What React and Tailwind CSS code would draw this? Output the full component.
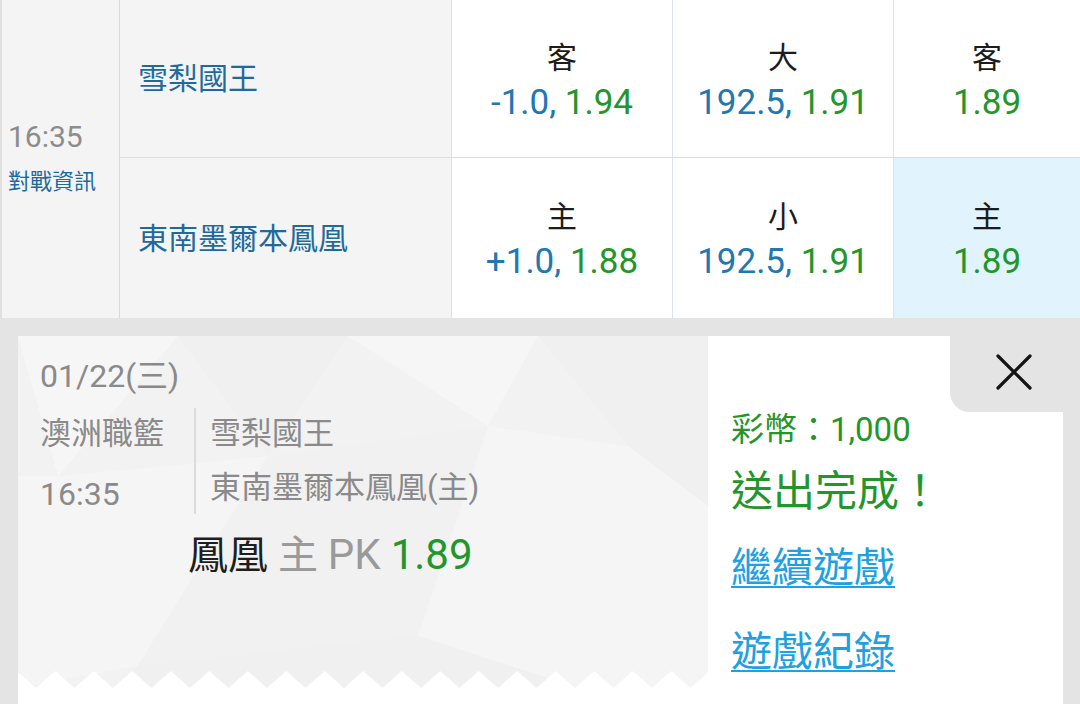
import React from "react";

const font = "font-['Roboto','Noto_Sans_CJK_TC',sans-serif]";

function OddsCell({ label, line, price, active, last }) {
  return (
    <div
      className={`flex flex-col items-center justify-center pt-[5px] ${
        last ? "flex-1" : "w-[221px] border-r border-[#dde2e6]"
      } ${active ? "bg-[#e1f3fc]" : "bg-white"}`}
    >
      <span className="text-[30px] leading-[38px] text-[#1c1c1c]">{label}</span>
      <span className="text-[35px] leading-[42px] mt-[5px]">
        {line && <span className="text-[#2177b1]">{line}, </span>}
        <span className="text-[#22962a]">{price}</span>
      </span>
    </div>
  );
}

function MatchRow({ team, spread, total, money, bottom }) {
  return (
    <div className={`flex ${bottom ? "h-[160px]" : "h-[158px] border-b border-[#d6dde3]"}`}>
      <div className="w-[332px] bg-[#f4f4f4] border-r border-[#dde2e6] flex items-center pl-[18px]">
        <span className="text-[30px] text-[#1f6a9c]">{team}</span>
      </div>
      <OddsCell {...spread} />
      <OddsCell {...total} />
      <OddsCell {...money} last />
    </div>
  );
}

// faint low-poly pattern behind the ticket
function TicketPattern() {
  return (
    <svg className="absolute inset-0 w-full h-full" viewBox="0 0 690 352" preserveAspectRatio="none">
      <polygon points="0,0 160,0 40,140" fill="#ffffff" opacity="0.35" />
      <polygon points="160,0 330,0 250,120" fill="#ededed" opacity="0.4" />
      <polygon points="330,0 520,0 470,90" fill="#ffffff" opacity="0.3" />
      <polygon points="520,0 690,0 690,170 610,110" fill="#ededed" opacity="0.35" />
      <polygon points="0,140 40,140 250,120 120,330 0,352" fill="#f7f7f7" opacity="0.5" />
      <polygon points="250,120 470,90 400,300 120,330" fill="#efefef" opacity="0.4" />
      <polygon points="470,90 610,110 690,170 690,352 560,352 400,300" fill="#f7f7f7" opacity="0.5" />
      <polygon points="120,330 400,300 560,352 100,352" fill="#ededed" opacity="0.4" />
    </svg>
  );
}

function Zigzag() {
  return (
    <svg className="absolute left-0 bottom-0 w-full h-[17px]">
      <defs>
        <pattern id="teeth" x="18" y="0" width="38.5" height="17" patternUnits="userSpaceOnUse">
          <path d="M0 17 L19.25 0 L38.5 17 Z" fill="#ffffff" />
        </pattern>
      </defs>
      <rect width="100%" height="17" fill="url(#teeth)" />
    </svg>
  );
}

export default function App() {
  return (
    <div className={`w-[1080px] h-[704px] overflow-hidden bg-[#e4e4e4] ${font}`}>
      {/* odds table */}
      <div className="flex h-[318px] border-l-2 border-[#e0e0e0] bg-white">
        <div className="w-[118px] bg-[#f4f4f4] border-r border-[#d9d9d9] flex flex-col justify-center pl-[6px] pb-[4px]">
          <span className="text-[30px] leading-[36px] text-[#8c8c8c]">16:35</span>
          <span className="text-[22px] leading-[28px] mt-[13px] text-[#1f6a9c]">對戰資訊</span>
        </div>
        <div className="flex-1 flex flex-col">
          <MatchRow
            team="雪梨國王"
            spread={{ label: "客", line: "-1.0", price: "1.94" }}
            total={{ label: "大", line: "192.5", price: "1.91" }}
            money={{ label: "客", price: "1.89" }}
          />
          <MatchRow
            team="東南墨爾本鳳凰"
            spread={{ label: "主", line: "+1.0", price: "1.88" }}
            total={{ label: "小", line: "192.5", price: "1.91" }}
            money={{ label: "主", price: "1.89", active: true }}
            bottom
          />
        </div>
      </div>

      {/* bet confirmation */}
      <div className="pt-[18px] pl-[18px] pr-[17px]">
        <div className="flex bg-white h-[380px]">
          <div className="relative w-[690px] h-[352px] bg-[#f2f2f2]">
            <TicketPattern />
            <Zigzag />
            <div className="relative pl-[22px] pt-[20px] text-[31px] text-[#8a8a8a]">
              <div className="leading-[40px] text-[32px]">01/22(三)</div>
              <div className="flex mt-[12px]">
                <div className="w-[154px] pt-[6px] flex flex-col gap-[20px]">
                  <span className="leading-[40px]">澳洲職籃</span>
                  <span className="leading-[40px] text-[32px]">16:35</span>
                </div>
                <div className="border-l-2 border-[#dcdcdc] pl-[14px] pt-[6px] flex flex-col gap-[14px] text-[31px]">
                  <span className="leading-[40px]">雪梨國王</span>
                  <span className="leading-[40px]">東南墨爾本鳳凰(主)</span>
                </div>
              </div>
              <div className="ml-[148px] mt-[17px] text-[40px] leading-[48px]">
                <span className="text-[#1e1e1e]">鳳凰</span>
                <span className="text-[#9a9a9a]"> 主 <span className="text-[42px]">PK</span> </span>
                <span className="text-[#22962a] text-[42px]">1.89</span>
              </div>
            </div>
          </div>

          <div className="relative flex-1 pl-[23px] pt-[74px]">
            <button className="absolute top-0 right-0 w-[113px] h-[76px] bg-[#e4e4e4] rounded-bl-[20px] flex items-center justify-center pl-[15px] pb-[4px]">
              <svg width="36" height="36" viewBox="0 0 36 36">
                <path d="M2 2 L34 34 M34 2 L2 34" stroke="#141414" strokeWidth="3.2" strokeLinecap="round" />
              </svg>
            </button>
            <div className="text-[33px] leading-[40px] text-[#22962a]">彩幣：1,000</div>
            <div className="text-[42px] leading-[48px] text-[#22962a] mt-[18px]">送出完成！</div>
            <div className="mt-[28px]">
              <a className="text-[41px] leading-[48px] text-[#1da1e2] underline decoration-2 underline-offset-[4px]">繼續遊戲</a>
            </div>
            <div className="mt-[36px]">
              <a className="text-[41px] leading-[48px] text-[#1da1e2] underline decoration-2 underline-offset-[4px]">遊戲紀錄</a>
            </div>
          </div>
        </div>
      </div>
    </div>
  );
}
